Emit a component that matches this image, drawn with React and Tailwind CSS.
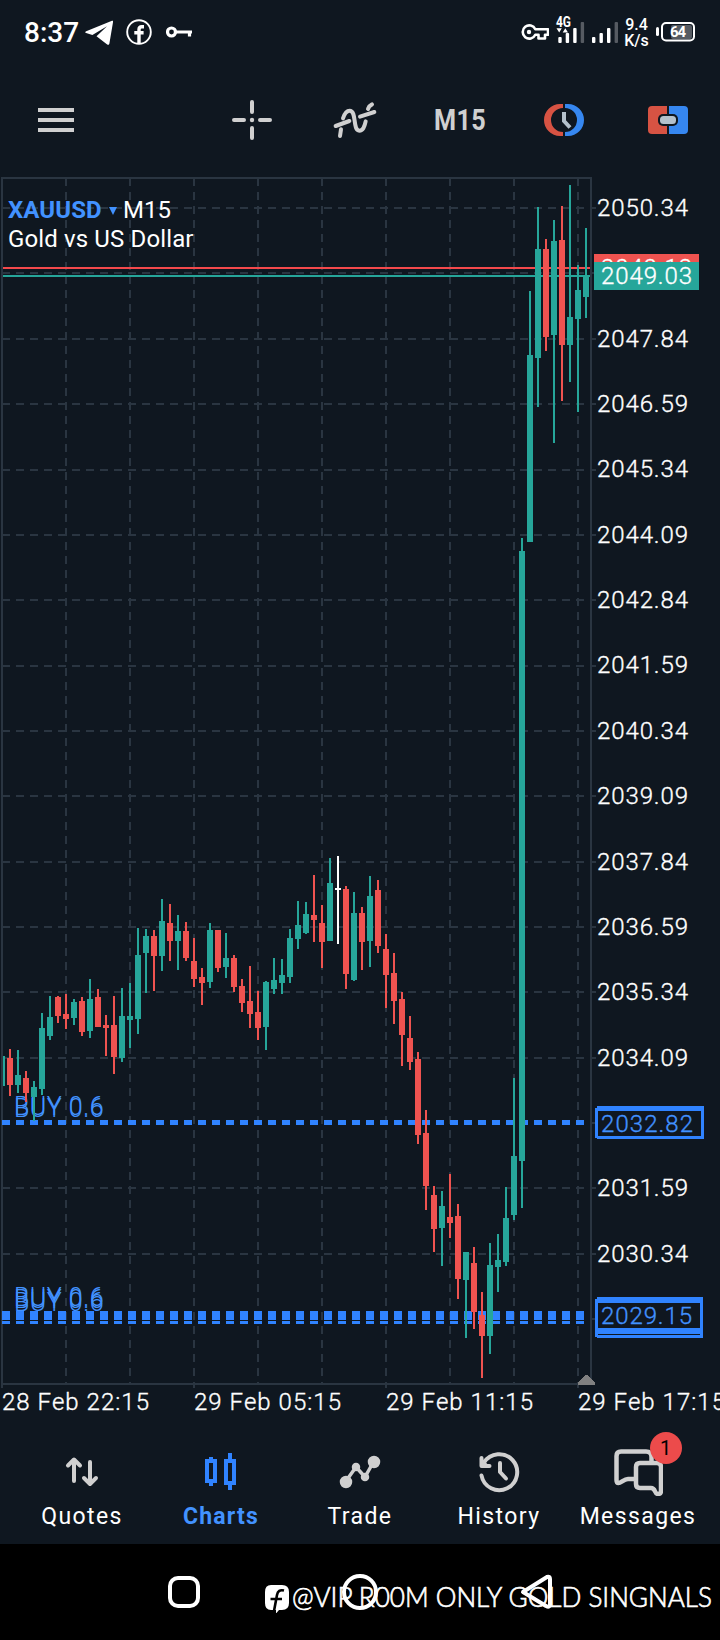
import React from 'react';

const UP = '#26a69a';
const DOWN = '#ef5350';
const GRID = '#2a3541';
const ORDER = '#3083ff';

// x, wick top, wick bottom, body top, body bottom, direction
const candles = [
  [2, 1056, 1086, 1056, 1086, 'u'],
  [10, 1049, 1096, 1058, 1085, 'd'],
  [18, 1050, 1093, 1075, 1085, 'u'],
  [26, 1071, 1102, 1078, 1093, 'd'],
  [34, 1081, 1121, 1087, 1097, 'u'],
  [42, 1013, 1095, 1028, 1089, 'u'],
  [50, 996, 1040, 1017, 1036, 'u'],
  [58, 996, 1023, 997, 1016, 'd'],
  [66, 994, 1029, 1014, 1019, 'd'],
  [74, 999, 1025, 1002, 1018, 'u'],
  [82, 997, 1036, 1001, 1032, 'd'],
  [90, 979, 1038, 999, 1031, 'u'],
  [98, 989, 1027, 997, 1027, 'd'],
  [106, 1015, 1056, 1025, 1028, 'd'],
  [114, 996, 1074, 1025, 1057, 'd'],
  [122, 988, 1062, 1016, 1058, 'u'],
  [130, 983, 1048, 1016, 1020, 'u'],
  [138, 928, 1034, 955, 1019, 'u'],
  [146, 929, 993, 936, 953, 'u'],
  [154, 930, 991, 936, 956, 'd'],
  [162, 899, 971, 921, 956, 'u'],
  [170, 904, 961, 923, 941, 'd'],
  [178, 915, 970, 931, 941, 'u'],
  [186, 922, 961, 931, 958, 'd'],
  [194, 938, 987, 961, 979, 'd'],
  [202, 968, 1005, 977, 983, 'd'],
  [210, 923, 988, 930, 982, 'u'],
  [218, 930, 972, 930, 968, 'd'],
  [226, 933, 978, 958, 967, 'u'],
  [234, 955, 992, 958, 987, 'd'],
  [242, 979, 1012, 986, 1003, 'd'],
  [250, 966, 1028, 1001, 1014, 'd'],
  [258, 991, 1040, 1012, 1028, 'd'],
  [266, 981, 1050, 982, 1027, 'u'],
  [274, 958, 994, 980, 989, 'u'],
  [282, 959, 994, 975, 983, 'u'],
  [290, 929, 983, 938, 977, 'u'],
  [298, 901, 949, 925, 939, 'u'],
  [306, 902, 934, 914, 933, 'u'],
  [314, 875, 942, 915, 920, 'd'],
  [322, 905, 968, 923, 942, 'd'],
  [330, 858, 941, 883, 941, 'u'],
  [338, 856, 944, 888, 890, 'n'],
  [346, 886, 989, 889, 974, 'd'],
  [354, 892, 981, 913, 980, 'u'],
  [362, 907, 970, 913, 942, 'd'],
  [370, 876, 967, 896, 941, 'u'],
  [378, 880, 953, 890, 946, 'd'],
  [386, 934, 1008, 949, 975, 'd'],
  [394, 953, 1024, 973, 1001, 'd'],
  [402, 992, 1066, 999, 1035, 'd'],
  [410, 1016, 1070, 1038, 1062, 'd'],
  [418, 1052, 1144, 1059, 1135, 'd'],
  [426, 1110, 1210, 1133, 1186, 'd'],
  [434, 1186, 1252, 1195, 1229, 'd'],
  [442, 1191, 1266, 1206, 1228, 'u'],
  [450, 1174, 1238, 1217, 1223, 'd'],
  [458, 1204, 1299, 1216, 1279, 'd'],
  [466, 1252, 1338, 1252, 1280, 'u'],
  [474, 1247, 1329, 1263, 1312, 'd'],
  [482, 1292, 1378, 1315, 1336, 'd'],
  [490, 1243, 1354, 1265, 1336, 'u'],
  [498, 1234, 1292, 1260, 1267, 'u'],
  [506, 1187, 1266, 1218, 1262, 'u'],
  [514, 1078, 1220, 1156, 1215, 'u'],
  [522, 538, 1208, 551, 1161, 'u'],
  [530, 291, 542, 355, 542, 'u'],
  [538, 207, 407, 249, 358, 'u'],
  [546, 239, 351, 249, 337, 'd'],
  [554, 220, 443, 241, 335, 'u'],
  [562, 206, 401, 240, 345, 'd'],
  [570, 185, 382, 317, 345, 'u'],
  [578, 265, 412, 290, 319, 'u'],
  [586, 228, 318, 276, 297, 'u'],
];

const candleColor = { u: UP, d: DOWN, n: '#ffffff' };

const gridRows = [208, 273, 339, 404, 470, 535, 600, 666, 731, 796, 862, 927, 992, 1058, 1123, 1188, 1254, 1319];
const gridCols = [66, 130, 194, 258, 322, 386, 450, 514, 578];

const priceLabels = [
  [208, '2050.34'],
  [339, '2047.84'],
  [404, '2046.59'],
  [469, '2045.34'],
  [535, '2044.09'],
  [600, '2042.84'],
  [665, '2041.59'],
  [731, '2040.34'],
  [796, '2039.09'],
  [862, '2037.84'],
  [927, '2036.59'],
  [992, '2035.34'],
  [1058, '2034.09'],
  [1188, '2031.59'],
  [1254, '2030.34'],
];

const timeLabels = [
  [2, '28 Feb 22:15'],
  [194, '29 Feb 05:15'],
  [386, '29 Feb 11:15'],
  [578, '29 Feb 17:15'],
];

const StatusBar = () => (
  <div className="h-16 flex items-center pl-6 pr-[25px] text-white">
    <span className="w-[61px] pt-0.5 text-[28px] font-medium leading-none">8:37</span>
    <svg className="mt-0.5" width="28" height="26" viewBox="0 0 28 26" fill="#fff">
      <path d="M27 .8 1.2 11.2c-1.3.6-1.2 1.4-.1 1.8l6.300 2L22 6.200 11.500 16.300l10.700 8.200c1.2.7 1.900.3 2.200-1L28 2.200C28.200.9 27.900.5 27 .8z" />
    </svg>
    <svg className="ml-[13px]" width="26" height="26" viewBox="0 0 26 26" fill="none" stroke="#fff">
      <circle cx="13" cy="13" r="11.8" strokeWidth="1.9" />
      <path d="M13 24.500V10.500Q13 7.700 15.800 7.700H18M8.300 13.800H17.600" strokeWidth="3.400" />
    </svg>
    <svg className="ml-[14px]" width="27" height="14" viewBox="0 0 27 14" fill="none" stroke="#fff">
      <circle cx="5.500" cy="7" r="4" strokeWidth="3.200" />
      <path d="M9 7H26M23.500 7V11.500" strokeWidth="3.200" />
    </svg>

    <svg className="ml-auto" width="28" height="18" viewBox="0 0 28 18" fill="none" stroke="#fff" strokeWidth="2.600" strokeLinejoin="round">
      <path d="M14.300 6.200A6.600 6.600 0 1 0 14.300 11.800H17.500V15.500H24V11.800H27V6.200Z" />
      <circle cx="8" cy="9" r="2.200" fill="#fff" stroke="none" />
    </svg>
    <svg className="ml-[6px] overflow-visible" width="30" height="30" viewBox="555 17 30 30" fill="#fff">
      <text x="556" y="27" fontSize="14" fontWeight="700" textLength="15" lengthAdjust="spacingAndGlyphs">4G</text>
      <path d="M556.500 28.200H561.800L559.200 32.500ZM562.700 32.500H568L565.300 28.200Z" />
      <rect x="558.300" y="37" width="3.400" height="6" rx="1" />
      <rect x="565.700" y="33" width="3.400" height="10" rx="1" />
      <rect x="573.200" y="28" width="3.400" height="15" rx="1" />
      <rect x="580.700" y="22" width="3.400" height="21" rx="1" fill="#565b62" />
    </svg>
    <svg className="ml-[6px]" width="28" height="30" viewBox="591 17 28 30" fill="#fff">
      <rect x="592" y="37" width="3.400" height="6" rx="1" />
      <rect x="599.500" y="33" width="3.400" height="10" rx="1" />
      <rect x="607" y="28" width="3.400" height="15" rx="1" />
      <rect x="614.600" y="22" width="3.400" height="21" rx="1" fill="#565b62" />
    </svg>
    <div className="ml-[5px] w-[25px] pt-0.5 text-center text-[16px] leading-[16px] font-medium whitespace-nowrap">
      <div>9.4</div>
      <div>K/s</div>
    </div>
    <svg className="ml-[6px]" width="40" height="20" viewBox="655 22 40 20">
      <rect x="656" y="27" width="3" height="9" rx="1.500" fill="#fff" />
      <rect x="671" y="25" width="21" height="14" rx="2" fill="#565b62" />
      <rect x="662" y="23" width="32" height="17.500" rx="4" fill="none" stroke="#fff" strokeWidth="2" />
      <text x="670" y="37" fontSize="15" fontWeight="700" fill="#fff" textLength="16">64</text>
    </svg>
  </div>
);

const Toolbar = () => (
  <div className="h-28 flex items-center">
    <div className="flex-1 pl-[38px]">
      <div className="w-9 flex flex-col gap-1.5">
        <div className="h-1 bg-[#d0d0d0]" />
        <div className="h-1 bg-[#d0d0d0]" />
        <div className="h-1 bg-[#d0d0d0]" />
      </div>
    </div>
    <div className="w-[104px] flex justify-center">
      <svg width="40" height="40" viewBox="0 0 40 40" stroke="#d0d0d0" strokeWidth="4" strokeLinecap="round">
        <path d="M20 2V12M20 28V38M2 20H12M28 20H38" />
        <circle cx="20" cy="20" r="2.200" fill="#d0d0d0" stroke="none" />
      </svg>
    </div>
    <div className="w-[104px] flex justify-center pr-0.5">
      <svg width="44" height="40" viewBox="24 30 132 120" fill="none" stroke="#d0d0d0" strokeWidth="12" strokeLinecap="round">
        <path d="M45 138 48 118M54 85C60 66 67 62 74 62C96 62 82 122 103 122C114 122 118 112 122 94M129 57 133 49 141 43" />
        <path d="M32 108 73 93M105 80 148 66" />
      </svg>
    </div>
    <div className="w-[104px] flex justify-center">
      <span className="text-[30px] leading-none font-bold text-[#d0d0d0] scale-x-[0.84] tracking-[0.5px]">M15</span>
    </div>
    <div className="w-[104px] flex justify-center">
      <svg width="40" height="32" viewBox="0 0 40 32">
        <path d="M19 0H16A16 16 0 0 0 16 32H19V28A12 12 0 0 1 19 4Z" fill="#d75343" />
        <path d="M21 0H24A16 16 0 0 1 24 32H21V28A12 12 0 0 0 21 4Z" fill="#3687f0" />
        <path d="M20 8V17L26 23.500" fill="none" stroke="#b4c1cc" strokeWidth="4" />
      </svg>
    </div>
    <div className="w-[104px] flex justify-center">
      <svg width="40" height="28" viewBox="0 0 40 28">
        <path d="M19 0H4A4 4 0 0 0 0 4V24A4 4 0 0 0 4 28H19Z" fill="#d75343" />
        <path d="M21 0H36A4 4 0 0 1 40 4V24A4 4 0 0 1 36 28H21Z" fill="#3687f0" />
        <rect x="10" y="8" width="20" height="12" rx="5" fill="#0f1720" />
        <rect x="12" y="10" width="16" height="8" rx="3.500" fill="#b4c1cc" />
      </svg>
    </div>
  </div>
);

const ScaleText = ({ x, y, width, color = '#fff', children }) => (
  <text x={x} y={y} fill={color} stroke={color} strokeWidth="0.35" fontWeight="300" textLength={width}>{children}</text>
);

const OrderLabel = ({ y }) => (
  <text x="14" y={y} fontSize="25" fontWeight="300" fill="#4292ff" textLength="89.500">BUY 0.6</text>
);

const Chart = () => (
  <div className="relative h-[1248px]">
    <svg className="block" width="720" height="1248" viewBox="0 176 720 1248" fontSize="24" shapeRendering="crispEdges">
      {/* Grid */}
      <g stroke={GRID} strokeWidth="2" strokeDasharray="8 6">
        {gridRows.map((y) => <line key={y} x1="2" y1={y} x2="596" y2={y} />)}
        {gridCols.map((x) => <line key={x} x1={x} y1="178" x2={x} y2="1384" />)}
      </g>
      <path d="M2 1388V178H591V1384M2 1384H591M194 1384V1388M386 1384V1388M578 1384V1388" fill="none" stroke={GRID} strokeWidth="2" />

      {/* Ask and bid */}
      <rect x="3" y="267" width="587" height="2" fill="#f4494c" />
      <rect x="3" y="275" width="587" height="2" fill={UP} />

      {/* Open orders */}
      <g stroke={ORDER} strokeDasharray="8 6">
        <line x1="2" y1="1122.500" x2="586" y2="1122.500" strokeWidth="5" />
        <line x1="2" y1="1315.500" x2="586" y2="1315.500" strokeWidth="9" />
        <line x1="2" y1="1322.500" x2="586" y2="1322.500" strokeWidth="3" />
      </g>
      {[1115, 1117, 1306, 1308, 1311].map((y) => <OrderLabel key={y} y={y} />)}

      {/* Candles */}
      {candles.map(([x, top, bottom, open, close, dir]) => (
        <g key={x} fill={candleColor[dir]}>
          <rect x={x - 1} y={top} width="2" height={bottom - top} />
          <rect x={x - 3} y={open} width="6" height={close - open} />
        </g>
      ))}
      <rect x="0" y="1050" width="1" height="60" fill="#0f1720" />
      <rect x="1" y="1050" width="2" height="60" fill={GRID} />

      {/* Price scale */}
      {priceLabels.map(([y, label]) => (
        <ScaleText key={label} x={597} y={y + 8} width={91}>{label}</ScaleText>
      ))}
      <rect x="594" y="254" width="105" height="28" fill={DOWN} />
      <ScaleText x={601} y={276} width={91}>2049.12</ScaleText>
      <rect x="594" y="262" width="105" height="28" fill={UP} />
      <ScaleText x={601} y={284} width={91}>2049.03</ScaleText>

      <path d="M597 1106H704V1139H597V1138H595V1108H597ZM598 1111V1136H701V1111Z" fill={ORDER} fillRule="evenodd" />
      <ScaleText x={601} y={1132} width={92} color="#4292ff">2032.82</ScaleText>
      <path d="M597 1297H703V1338H597V1337H595V1299H597ZM598 1303V1328H700V1303ZM598 1334V1335H700V1334Z" fill={ORDER} fillRule="evenodd" />
      <ScaleText x={601} y={1324} width={91} color="#4292ff">2029.15</ScaleText>

      {/* Time scale */}
      {timeLabels.map(([x, label]) => (
        <ScaleText key={label} x={x} y={1410} width={147}>{label}</ScaleText>
      ))}
      <path d="M578 1385V1382L585 1375H587L595 1382V1385Z" fill="#808080" />
    </svg>

    {/* Symbol legend */}
    <div className="absolute left-2 top-[20px] text-[24px] leading-[29px] text-white whitespace-nowrap">
      <div className="flex items-center">
        <span className="w-[101px] font-bold text-[#4292ff] tracking-[0.1px]">XAUUSD</span>
        <svg width="8" height="8" viewBox="0 0 8 8" fill="#4292ff"><path d="M0 0H8L4 8Z" /></svg>
        <span className="ml-1.5">M15</span>
      </div>
      <div className="tracking-[0.13px]">Gold vs US Dollar</div>
    </div>
  </div>
);

const tabs = [
  {
    label: 'Quotes',
    icon: (
      <path d="M16 33V12M10 17.500 16 11.500 22 17.500M32 14V35M26 30 32 36 38 30" strokeWidth="4" />
    ),
  },
  {
    label: 'Charts',
    active: true,
    icon: (
      <g strokeLinecap="butt" strokeLinejoin="miter" strokeWidth="4">
        <path d="M10 13H18V33H10ZM14 9V13M14 33V38M29 13H37V35H29ZM33 5V13M33 35V42" />
      </g>
    ),
  },
  {
    label: 'Trade',
    icon: (
      <g strokeWidth="3.500">
        <path d="M10 33 20 19 29 29 38 13" />
        <circle cx="10" cy="34" r="4.500" fill="currentColor" />
        <circle cx="20" cy="19" r="2.500" fill="currentColor" />
        <circle cx="29" cy="29" r="2.500" fill="currentColor" />
        <circle cx="38" cy="14" r="4.500" fill="currentColor" />
      </g>
    ),
  },
  {
    label: 'History',
    icon: (
      <g strokeWidth="4">
        <path d="M6.500 27.500A18 18 0 1 0 9 14.500" />
        <path d="M6.500 10V18H14.500M25 15V24L31 30.500" />
        <path d="M6 9V19H15Z" fill="currentColor" stroke="none" />
      </g>
    ),
  },
  { label: 'Messages', badge: 1 },
];

const MessagesIcon = () => (
  <svg className="block" width="50" height="48" viewBox="0 0 50 48" fill="none" stroke="#d0d0d0" strokeWidth="4.500" strokeLinejoin="round">
    <path d="M22 31H15C11 31 8 35 5.500 35C4 35 3.500 34 3.500 32V8Q3.500 3.500 8 3.500H33Q38.500 3.500 38.500 9V14" />
    <path d="M27 15H44Q48 15 48 19V43Q48 46 45 46C41 46 43 40 38 40H27Q23 40 23 36V19Q23 15 27 15Z" />
  </svg>
);

const TabBar = () => (
  <div className="h-[120px] px-3 flex">
    {tabs.map((tab) => (
      <div key={tab.label} className="w-[139px] flex-shrink-0 flex flex-col items-center pt-6">
        <div className={tab.active ? 'relative text-[#3083ff]' : 'relative text-[#d0d0d0]'}>
          {tab.badge ? (
            <MessagesIcon />
          ) : (
            <svg className="block" width="48" height="48" viewBox="0 0 48 48" fill="none" stroke="currentColor" strokeLinecap="round" strokeLinejoin="round">
              {tab.icon}
            </svg>
          )}
          {tab.badge && (
            <span className="absolute left-[37px] -top-4 w-8 h-8 rounded-full bg-[#ec4b4b] text-[20px] leading-8 text-center text-black">
              {tab.badge}
            </span>
          )}
        </div>
        <span className={tab.active
          ? 'mt-[7px] pl-px text-[23px] leading-7 font-bold tracking-[1.2px] text-[#4292ff]'
          : 'mt-[7px] pl-px text-[23px] leading-7 tracking-[1.4px] text-white'}
        >
          {tab.label}
        </span>
      </div>
    ))}
  </div>
);

const NavBar = () => (
  <div className="relative h-24 bg-black">
    <svg className="block" width="720" height="96" viewBox="0 1544 720 96" fill="none" stroke="#fff" strokeWidth="4" strokeLinejoin="round">
      <rect x="170" y="1578" width="28" height="28" rx="8" />
      <circle cx="360" cy="1592" r="16" />
      <path d="M523 1592 547 1577Q550 1576 550 1579V1604Q550 1608 546 1606Z" />
    </svg>

    {/* Page watermark */}
    <div className="absolute left-[264px] top-[36px] flex items-center text-white">
      <svg width="26" height="30" viewBox="0 -1 26 30">
        <path d="M7 1H18Q25 1 25 8V19Q25 26 18 26H15L12 29.500V26H7Q1 26 1 19V8Q1 1 7 1Z" fill="#fff" />
        <path d="M20 6.500Q14 5 13 11L10 27M6.500 15H18" fill="none" stroke="#000" strokeWidth="2.600" />
      </svg>
      <svg width="430" height="36" viewBox="290 1576 430 36" className="overflow-visible" fill="#fff">
        <text x="292" y="1603" fontSize="28" fontWeight="300" stroke="#fff" strokeWidth="0.7" textLength="420" lengthAdjust="spacingAndGlyphs" className="font-['Lato',sans-serif]">@VIP R00M ONLY GOLD SINGNALS</text>
      </svg>
    </div>
  </div>
);

const App = () => {
  return (
    <div className="w-[720px] h-[1640px] overflow-hidden bg-[#0f1720] font-['Roboto',sans-serif]">
      <StatusBar />
      <Toolbar />
      <Chart />
      <TabBar />
      <NavBar />
    </div>
  );
};

export default App;
